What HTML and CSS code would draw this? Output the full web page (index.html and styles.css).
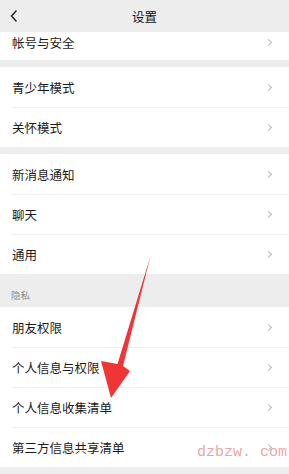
FILE: index.html
```html
<!DOCTYPE html>
<html lang="zh">
<head>
<meta charset="utf-8">
<link rel="stylesheet" href="styles.css">
</head>
<body>
<div class="page">
  <header class="topbar">
    <svg class="back" width="10" height="14" viewBox="0 0 10 14"><path d="M7.5 1.5 L2.5 7 L7.5 12.5" fill="none" stroke="#222" stroke-width="1.4"/></svg>
    <div class="title">设置</div>
  </header>
  <div class="group first">
    <div class="row short"><span>帐号与安全</span><i class="chev"></i></div>
  </div>
  <div class="group">
    <div class="row"><span>青少年模式</span><i class="chev"></i></div>
    <div class="row"><span>关怀模式</span><i class="chev"></i></div>
  </div>
  <div class="group">
    <div class="row"><span>新消息通知</span><i class="chev"></i></div>
    <div class="row"><span>聊天</span><i class="chev"></i></div>
    <div class="row"><span>通用</span><i class="chev"></i></div>
  </div>
  <div class="label">隐私</div>
  <div class="group nogap">
    <div class="row"><span>朋友权限</span><i class="chev"></i></div>
    <div class="row"><span>个人信息与权限</span><i class="chev"></i></div>
    <div class="row"><span>个人信息收集清单</span><i class="chev"></i></div>
    <div class="row"><span>第三方信息共享清单</span><i class="chev"></i></div>
  </div>
  <svg class="arrow" width="289" height="474" viewBox="0 0 289 474"><polygon points="150.5,256 123,366 130,371 111,398 101,361 117.5,364" fill="#ef3535"/></svg>
  <div class="watermark">dzbzw. com</div>
</div>
</body>
</html>
```
FILE: styles.css
```css
* { box-sizing: border-box; }
html, body { margin: 0; padding: 0; }
body {
  background: #ededed;
  font-family: "Noto Sans CJK SC", "Noto Sans", sans-serif;
  width: 289px;
  height: 474px;
  overflow: hidden;
}
.page { position: relative; width: 289px; height: 474px; }
.topbar {
  height: 32px;
  display: flex;
  align-items: center;
  justify-content: center;
  position: relative;
  background: #ededed;
}
.back { position: absolute; left: 9px; top: 9px; }
.title { font-size: 12.5px; color: #111; }
.group { background: #fff; margin-top: 7px; }
.group.first { margin-top: 0; }
.group.nogap { margin-top: 0; }
.row {
  height: 40px;
  display: flex;
  align-items: center;
  justify-content: space-between;
  padding: 0 16px 0 12px;
  font-size: 12.5px;
  color: #1a1a1a;
  position: relative;
}
.row.short { height: 28px; align-items: flex-start; padding-top: 1px; }
.row + .row::before {
  content: "";
  position: absolute;
  left: 12px; right: 0; top: 0;
  height: 1px;
  background: #f0f0f0;
}
.chev {
  width: 5px; height: 5px;
  border-top: 1px solid #b8b8b8;
  border-right: 1px solid #b8b8b8;
  transform: rotate(45deg);
  margin-right: 2px;
}
.row.short .chev { margin-top: 7px; }
.label {
  height: 33px;
  padding: 14px 0 0 11px;
  font-size: 9.5px;
  color: #8a8a8a;
  line-height: 14px;
}
.arrow { position: absolute; left: 0; top: 0; }
.watermark {
  position: absolute;
  left: 197px;
  top: 444px;
  font-family: "Liberation Mono", monospace;
  font-size: 15px;
  color: #eca6a6;
  white-space: nowrap;
}
```
